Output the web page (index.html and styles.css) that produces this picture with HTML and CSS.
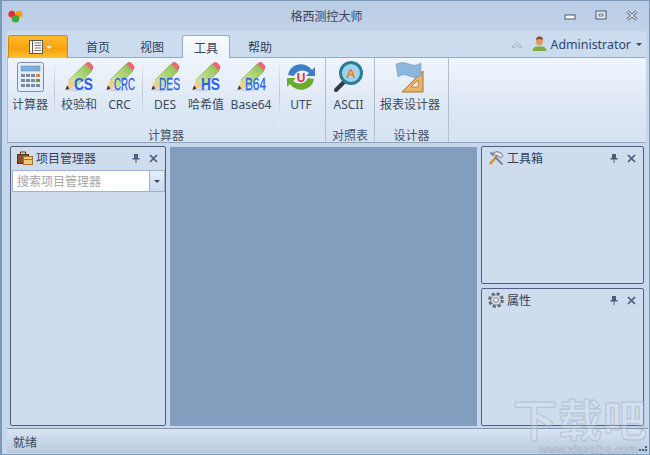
FILE: index.html
```html
<!DOCTYPE html>
<html lang="zh-CN">
<head>
  <meta charset="UTF-8">
  <meta name="viewport" content="width=device-width, initial-scale=1.0">
  <title>格西测控大师</title>
  <link rel="stylesheet" href="styles.css">
</head>
<body>
  <svg class="defs" width="0" height="0">
    <defs>
      <linearGradient id="pencilBody" x1="0" y1="1" x2="1" y2="0">
        <stop offset="0" stop-color="#dff0a6"/>
        <stop offset="1" stop-color="#86bb4c"/>
      </linearGradient>
      <g id="pencil">
        <ellipse cx="12" cy="29" rx="10" ry="1.500" fill="#b9c4d2" opacity="0.6"/>
        <path d="M6 19 L22 3 L29 10 L13 26 Z" fill="url(#pencilBody)" stroke="#84a858" stroke-width="0.6"/>
        <path d="M22 3 L24.500 1 Q26 0.500 27.500 2 L30 4.500 Q31 6 30 7.500 L29 10 Z" fill="#ea6a70"/>
        <path d="M6 19 L13 26 L2.500 29 Z" fill="#f2cf8e"/>
        <path d="M4 24.500 L6.500 27.500 L2.500 29 Z" fill="#333"/>
      </g>
    </defs>
  </svg>

  <div class="window">
    <header class="titlebar">
      <svg class="app-icon" width="15" height="13" viewBox="0 0 15 13">
        <circle cx="3.800" cy="4.200" r="3.400" fill="#e0303a"/>
        <circle cx="11" cy="4.200" r="3.400" fill="#f59a1c"/>
        <circle cx="7.500" cy="8.800" r="3.800" fill="#3fa83a"/>
      </svg>
      <h1 class="app-title">格西测控大师</h1>
      <div class="win-controls">
        <svg width="12" height="12" viewBox="0 0 12 12"><rect x="1" y="5" width="10" height="4" fill="#fff" stroke="#4a5568"/></svg>
        <svg width="12" height="12" viewBox="0 0 12 12"><rect x="1" y="1" width="10" height="8" fill="#e6edf6" stroke="#4a5568"/><rect x="4" y="4" width="4" height="2" fill="#fff" stroke="#4a5568" stroke-width="0.8"/></svg>
        <svg width="12" height="12" viewBox="0 0 12 12"><path d="M1.500 1.500 L10.500 9.500 M10.500 1.500 L1.500 9.500" stroke="#4a5568" stroke-width="3"/><path d="M1.500 1.500 L10.500 9.500 M10.500 1.500 L1.500 9.500" stroke="#eef2f7" stroke-width="1.200"/></svg>
      </div>
    </header>

    <nav class="tabbar">
      <button class="app-menu">
        <svg width="14" height="14" viewBox="0 0 14 14">
          <rect x="0.500" y="0.500" width="13" height="13" fill="#fff" stroke="#5f5a50"/>
          <path d="M3.500 0.500 V13.500" stroke="#5f5a50"/>
          <path d="M5.500 3 H12 M5.500 5.500 H12 M5.500 8 H12 M5.500 10.500 H12" stroke="#77716a"/>
        </svg>
        <span class="caret caret-menu"></span>
      </button>
      <a class="tab">首页</a>
      <a class="tab">视图</a>
      <a class="tab tab-active">工具</a>
      <a class="tab">帮助</a>
      <div class="account">
        <svg width="12" height="9" viewBox="0 0 12 9"><path d="M1 7 L6 2 L11 7 L9 8 L6 5 L3 8 Z" fill="none" stroke="#a5b2c4"/></svg>
        <svg class="avatar" width="15" height="16" viewBox="0 0 15 16">
          <path d="M0.500 15 Q1 10.500 5 10.500 H10 Q14 10.500 14.500 15 Z" fill="#7fae3c"/>
          <ellipse cx="7.500" cy="5" rx="3.500" ry="4.500" fill="#d99a68"/>
          <path d="M4 4 Q4 0.500 7.500 0.500 Q11 0.500 11 4 Q7.500 2 4 4 Z" fill="#8a4f28"/>
        </svg>
        <span class="account-name">Administrator</span>
        <span class="caret"></span>
      </div>
    </nav>

    <section class="ribbon">
      <div class="group group-calc">
        <div class="group-items">
          <div class="tool tool-calc">
            <svg width="32" height="32" viewBox="0 0 32 32">
              <rect x="3.500" y="1.500" width="26" height="29" rx="2" fill="#e7edf6" stroke="#7d8da5"/>
              <rect x="7" y="5" width="19" height="5" fill="#7fb0dc" stroke="#5a86b5" stroke-width="0.5"/>
              <g fill="#7a8aa5">
                <rect x="7" y="13" width="4" height="3"/><rect x="12" y="13" width="4" height="3"/><rect x="17" y="13" width="4" height="3"/>
                <rect x="7" y="18" width="4" height="3"/><rect x="12" y="18" width="4" height="3"/><rect x="17" y="18" width="4" height="3"/>
                <rect x="7" y="23" width="4" height="3"/><rect x="12" y="23" width="4" height="3"/><rect x="17" y="23" width="4" height="3"/>
              </g>
              <rect x="22" y="13" width="4" height="3" fill="#d98b3c"/>
              <rect x="22" y="18" width="4" height="3" fill="#6b9a3a"/>
              <rect x="22" y="23" width="4" height="3" fill="#7a8aa5"/>
            </svg>
            <span>计算器</span>
          </div>
          <i class="sep sep-first"></i>
          <div class="tool">
            <svg width="32" height="32" viewBox="0 0 32 32"><use href="#pencil"/><text class="badge" x="11" y="28.500" font-size="16" textLength="19" lengthAdjust="spacingAndGlyphs">CS</text></svg>
            <span>校验和</span>
          </div>
          <div class="tool tool-crc">
            <svg width="32" height="32" viewBox="0 0 32 32"><use href="#pencil"/><text class="badge badge-thin" x="10" y="28.500" font-size="16" textLength="21" lengthAdjust="spacingAndGlyphs">CRC</text></svg>
            <span>CRC</span>
          </div>
          <i class="sep sep-second"></i>
          <div class="tool">
            <svg width="32" height="32" viewBox="0 0 32 32"><use href="#pencil"/><text class="badge badge-thin" x="10" y="28.500" font-size="16" textLength="21" lengthAdjust="spacingAndGlyphs">DES</text></svg>
            <span>DES</span>
          </div>
          <div class="tool tool-hash">
            <svg width="32" height="32" viewBox="0 0 32 32"><use href="#pencil"/><text class="badge" x="11" y="28.500" font-size="16" textLength="19" lengthAdjust="spacingAndGlyphs">HS</text></svg>
            <span>哈希值</span>
          </div>
          <div class="tool tool-base">
            <svg width="32" height="32" viewBox="0 0 32 32"><use href="#pencil"/><text class="badge badge-thin" x="10" y="28.500" font-size="16" textLength="21" lengthAdjust="spacingAndGlyphs">B64</text></svg>
            <span>Base64</span>
          </div>
          <i class="sep sep-third"></i>
          <div class="tool">
            <svg width="32" height="32" viewBox="0 0 32 32">
              <path d="M3 14 A13 12 0 0 1 27 9 L30 6 V15 H21 L24 12 A9 8 0 0 0 9 15 Z" fill="#3d7fc6"/>
              <path d="M29 18 A13 12 0 0 1 5 23 L2 26 V17 H11 L8 20 A9 8 0 0 0 23 17 Z" fill="#69ab2c"/>
              <text class="badge-u" x="16" y="21" text-anchor="middle" font-size="12">U</text>
            </svg>
            <span>UTF</span>
          </div>
        </div>
        <div class="group-label">计算器</div>
      </div>

      <div class="group group-table">
        <div class="group-items">
          <div class="tool tool-ascii">
            <svg width="32" height="32" viewBox="0 0 32 32">
              <path d="M11 21 L3 29" stroke="#333a44" stroke-width="4" stroke-linecap="round"/>
              <circle cx="18" cy="12" r="10.500" fill="#9ed4ea" stroke="#2a7f97" stroke-width="3"/>
              <text class="badge-a" x="18" y="17" text-anchor="middle" font-size="13">A</text>
            </svg>
            <span>ASCII</span>
          </div>
        </div>
        <div class="group-label">对照表</div>
      </div>

      <div class="group group-design">
        <div class="group-items">
          <div class="tool tool-report">
            <svg width="32" height="32" viewBox="0 0 32 32">
              <path d="M29 10 V31 H8 Z" fill="#e9b468" stroke="#a8752e"/>
              <path d="M24 19 V26 H17 Z" fill="#f6f0e2" stroke="#a8752e" stroke-width="0.7"/>
              <path d="M2 3 Q9 0 15 3 T27 2 V15 Q21 18 15 15 T4 16 Z" fill="#8cb6dc" stroke="#6b97c2" stroke-width="0.6"/>
            </svg>
            <span>报表设计器</span>
          </div>
        </div>
        <div class="group-label">设计器</div>
      </div>
    </section>

    <main class="workspace">
      <aside class="panel panel-left">
        <div class="panel-head">
          <svg width="16" height="14" viewBox="0 0 16 14">
            <rect x="0.500" y="3.500" width="11" height="9" fill="#8a4f28" stroke="#5b3216"/>
            <path d="M3.500 3.500 V1 H8.500 V3.500" fill="none" stroke="#5b3216"/>
            <rect x="6.500" y="5.500" width="9" height="8" fill="#f2c877" stroke="#a8752e"/>
            <path d="M6.500 8.500 H15.500" stroke="#a8752e"/>
          </svg>
          <span class="panel-title">项目管理器</span>
          <div class="panel-actions">
            <svg width="8" height="10" viewBox="0 0 8 10"><path d="M2 1 H6 V5 H7.500 V6.500 H4.500 V10 H3.500 V6.500 H0.500 V5 H2 Z" fill="#4b5c78"/></svg>
            <svg width="9" height="9" viewBox="0 0 9 9"><path d="M1 1 L8 8 M8 1 L1 8" stroke="#4b5c78" stroke-width="1.700"/></svg>
          </div>
        </div>
        <div class="combo">
          <span class="combo-text">搜索项目管理器</span>
          <span class="combo-btn"><span class="caret"></span></span>
        </div>
      </aside>

      <div class="canvas"></div>

      <div class="side-stack">
        <aside class="panel panel-grow">
          <div class="panel-head">
            <svg width="16" height="16" viewBox="0 0 16 16">
              <path d="M2 14 L9 6" stroke="#d9892b" stroke-width="2.400"/>
              <path d="M5 3 Q9 0 13 3 L15 6 L13 8 L10 6 L7 5 Z" fill="#dfe4ea" stroke="#5c6675" stroke-width="0.800"/>
              <path d="M14.500 14.500 L7 7 M2.500 2.500 L5.500 5.500" stroke="#7a8494" stroke-width="2"/>
            </svg>
            <span class="panel-title">工具箱</span>
            <div class="panel-actions">
              <svg width="8" height="10" viewBox="0 0 8 10"><path d="M2 1 H6 V5 H7.500 V6.500 H4.500 V10 H3.500 V6.500 H0.500 V5 H2 Z" fill="#4b5c78"/></svg>
              <svg width="9" height="9" viewBox="0 0 9 9"><path d="M1 1 L8 8 M8 1 L1 8" stroke="#4b5c78" stroke-width="1.700"/></svg>
            </div>
          </div>
        </aside>
        <aside class="panel panel-grow">
          <div class="panel-head">
            <svg width="16" height="16" viewBox="0 0 16 16">
              <circle cx="8" cy="8" r="6.500" fill="none" stroke="#5c6675" stroke-width="2.600" stroke-dasharray="2.900 2.200"/>
              <circle cx="8" cy="8" r="5.200" fill="#d5dae2" stroke="#6b7584" stroke-width="0.800"/>
              <circle cx="8" cy="8" r="2.300" fill="#f2f4f7" stroke="#5c6675" stroke-width="0.800"/>
            </svg>
            <span class="panel-title">属性</span>
            <div class="panel-actions">
              <svg width="8" height="10" viewBox="0 0 8 10"><path d="M2 1 H6 V5 H7.500 V6.500 H4.500 V10 H3.500 V6.500 H0.500 V5 H2 Z" fill="#4b5c78"/></svg>
              <svg width="9" height="9" viewBox="0 0 9 9"><path d="M1 1 L8 8 M8 1 L1 8" stroke="#4b5c78" stroke-width="1.700"/></svg>
            </div>
          </div>
        </aside>
      </div>
    </main>

    <footer class="statusbar">
      <span>就绪</span>
      <div class="grip"><i></i><i></i><i></i><i></i><i></i><i></i></div>
    </footer>
  </div>

  <div class="stamp">
    <span class="stamp-big">下载吧</span>
    <span class="stamp-url">www.xiazaiba.com</span>
  </div>
</body>
</html>
```

FILE: styles.css
```css
* {
  box-sizing: border-box;
}
html, body {
  margin: 0;
  padding: 0;
  height: 455px;
  overflow: hidden;
}
body {
  position: relative;
  width: 650px;
  font-family: "Noto Sans CJK SC", "Noto Sans", sans-serif;
  font-size: 12px;
  color: #3c4a5e;
  background: #bdd0e8;
}
.defs {
  position: absolute;
}
.window {
  display: flex;
  flex-direction: column;
  width: 650px;
  height: 455px;
  padding: 0 3px 1px 5px;
  background: linear-gradient(#bacde5, #c6d7eb 60px);
  border: 1px solid #7d99ba;
  border-width: 1px 1px 1px 2px;
}

/* title bar */
.titlebar {
  display: grid;
  grid-template-columns: 1fr auto 1fr;
  align-items: center;
  height: 30px;
  margin-left: -6px;
  padding-left: 6px;
  flex: none;
}
.app-icon {
  margin-left: 1px;
}
.app-title {
  margin: 0;
  text-align: center;
  font-size: 12px;
  font-weight: 400;
  line-height: 30px;
  color: #3d4656;
}
.win-controls {
  display: flex;
  justify-content: flex-end;
  gap: 19px;
  padding-right: 8px;
}

/* tabs */
.tabbar {
  display: flex;
  align-items: flex-end;
  height: 27px;
  flex: none;
  background: #cddbee;
  border-bottom: 1px solid #93aac8;
}
.app-menu {
  display: flex;
  align-items: center;
  justify-content: center;
  gap: 3px;
  width: 60px;
  height: 23px;
  margin: 0 1px -1px 1px;
  padding: 0 0 0 4px;
  background: linear-gradient(#fdb92a, #f6a30c 60%, #fcc235);
  border: 1px solid #d18a18;
  border-bottom: 0;
  border-radius: 2px 2px 0 0;
}
.tab {
  width: 48px;
  height: 23px;
  margin-right: 6px;
  text-align: center;
  line-height: 25px;
  color: #33415a;
}
.tab:nth-of-type(1) {
  margin-left: 5px;
}
.tab-active {
  margin-bottom: -1px;
  background: linear-gradient(#f7fafe, #edf3fb);
  border: 1px solid #93aac8;
  border-bottom: 0;
  border-radius: 3px 3px 0 0;
  line-height: 23px;
}
.account {
  display: flex;
  align-items: center;
  margin-left: auto;
  height: 26px;
  padding-right: 4px;
  font-family: "Noto Sans", sans-serif;
  font-size: 12.4px;
  color: #2b4a73;
}
.account .avatar {
  margin-left: 9px;
}
.account-name {
  margin: 0 5px 0 4px;
}
.caret {
  display: inline-block;
  width: 0;
  height: 0;
  border-style: solid;
  border-width: 3px 3px 0;
  border-color: #3c4a5e transparent transparent;
}
.caret-menu {
  border-top-color: #fff3d0;
}

/* ribbon */
.ribbon {
  display: flex;
  height: 85px;
  flex: none;
  background: linear-gradient(#f0f5fc, #dce7f5 60%, #d6e2f2);
  border-bottom: 1px solid #8ea5c2;
  box-shadow: inset 1px 0 0 #a9bdd8;
}
.group {
  display: flex;
  flex-direction: column;
  border-right: 1px solid #aebfd6;
}
.group-calc {
  width: 319px;
}
.group-table {
  width: 49px;
}
.group-design {
  width: 74px;
}
.group-items {
  display: flex;
  flex: 1;
}
.group-label {
  height: 14px;
  text-align: center;
  line-height: 14px;
  color: #45536a;
}
.tool {
  display: flex;
  flex-direction: column;
  align-items: center;
  width: 40px;
  padding-top: 3px;
  flex: none;
  white-space: nowrap;
}
.tool svg {
  overflow: visible;
}
.tool span {
  margin-top: 3px;
  line-height: 18px;
  color: #3c4a5e;
  font-family: "Noto Sans", "Noto Sans CJK SC", sans-serif;
}
.tool-calc {
  width: 46px;
}
.tool-crc {
  width: 41px;
}
.tool-hash {
  width: 42px;
}
.tool-base {
  width: 48px;
}
.tool-ascii {
  width: 45px;
}
.tool-report {
  width: 70px;
}
.sep {
  width: 1px;
  height: 64px;
  margin-top: 3px;
  flex: none;
  background: linear-gradient(#e6edf7, #b8c8dc 50%, #e6edf7);
}
.sep-first {
  margin: 3px 4px 0 1px;
}
.sep-second {
  margin: 3px 2px 0;
}
.sep-third {
  margin: 3px 1px 0 4px;
}
.badge {
  font-family: "Liberation Sans", sans-serif;
  font-weight: 700;
  fill: #2a62ee;
}
.badge-thin {
  font-weight: 400;
  stroke: #2a62ee;
  stroke-width: 0.3;
}
.badge-u {
  font-family: "Liberation Sans", sans-serif;
  font-weight: 700;
  fill: #d8333a;
}
.badge-a {
  font-family: "Liberation Sans", sans-serif;
  font-weight: 700;
  fill: #ee7f1f;
}

/* docked panels */
.workspace {
  display: flex;
  flex: 1;
  min-height: 0;
  gap: 4px;
  padding: 3px 2px 2px 3px;
}
.panel {
  display: flex;
  flex-direction: column;
  background: #cfdcee;
  border: 1px solid #505f80;
  border-radius: 2px;
}
.panel-left {
  width: 156px;
}
.panel-grow {
  flex: 1;
}
.panel-head {
  display: flex;
  align-items: center;
  gap: 3px;
  height: 22px;
  padding: 0 7px 0 6px;
  flex: none;
  color: #33415a;
}
.panel-title {
  line-height: 22px;
}
.panel-actions {
  display: flex;
  align-items: center;
  gap: 9px;
  margin-left: auto;
}
.combo {
  display: flex;
  height: 22px;
  margin: 1px 0 0 1px;
  background: #fff;
  border: 1px solid #9db2cf;
}
.combo-text {
  flex: 1;
  padding-left: 4px;
  line-height: 20px;
  color: #a6a6a6;
}
.combo-btn {
  display: flex;
  align-items: center;
  justify-content: center;
  width: 15px;
  background: linear-gradient(#e6eefa, #c9d9ee);
  border-left: 1px solid #9db2cf;
}
.canvas {
  width: 307px;
  margin: 1px 0 0;
  background: #839dbf;
}
.side-stack {
  display: flex;
  flex-direction: column;
  flex: 1;
  gap: 4px;
}

/* status bar */
.statusbar {
  display: flex;
  align-items: center;
  justify-content: space-between;
  height: 25px;
  flex: none;
  margin-right: -2px;
  padding: 0 1px 0 6px;
  background: linear-gradient(#d9e4f3, #b7c9de);
  border-top: 1px solid #7f93b0;
  color: #3c4a5e;
}
.grip {
  display: grid;
  grid-template-columns: repeat(3, 2px);
  grid-auto-rows: 2px;
  gap: 1px;
  align-self: flex-end;
  margin-bottom: 2px;
}
.grip i {
  background: #4f5f78;
}
.grip i:nth-child(1), .grip i:nth-child(2) {
  background: transparent;
}

/* download-site stamp over the corner */
.stamp {
  position: absolute;
  left: 513px;
  top: 394px;
  width: 137px;
  height: 61px;
  display: flex;
  flex-direction: column;
  justify-content: space-between;
  pointer-events: none;
}
.stamp-big {
  font-size: 44px;
  letter-spacing: 1px;
  font-weight: 700;
  line-height: 48px;
  white-space: nowrap;
  color: rgba(225, 233, 243, 0.25);
  -webkit-text-stroke: 1px rgba(165, 180, 200, 0.7);
}
.stamp-url {
  padding-left: 26px;
  font-family: "Liberation Sans", sans-serif;
  font-size: 12px;
  line-height: 10px;
  white-space: nowrap;
  color: rgba(225, 233, 243, 0.7);
  -webkit-text-stroke: 0.5px rgba(140, 155, 175, 0.7);
}
```
